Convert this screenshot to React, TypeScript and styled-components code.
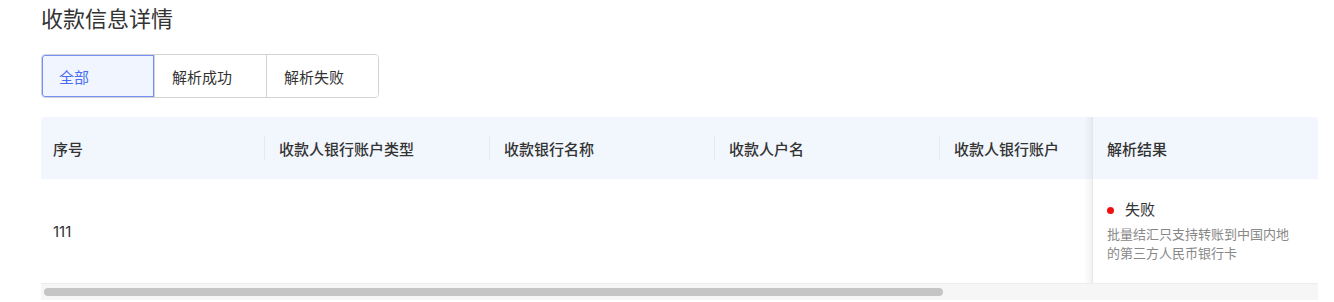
import React, { useState } from "react";
import styled, { createGlobalStyle } from "styled-components";

const GlobalStyle = createGlobalStyle`
  * { box-sizing: border-box; }
  body {
    margin: 0;
    background: #fff;
    font-family: Inter, "Noto Sans CJK SC", "Noto Sans", sans-serif;
    color: #333;
  }
`;

interface Column {
  key: string;
  title: string;
  width: number;
}

// the last one is scrolled out of view behind the fixed column
const columns: Column[] = [
  { key: "index", title: "序号", width: 224 },
  { key: "accountType", title: "收款人银行账户类型", width: 225 },
  { key: "bankName", title: "收款银行名称", width: 225 },
  { key: "payeeName", title: "收款人户名", width: 225 },
  { key: "account", title: "收款人银行账户", width: 225 },
  { key: "spare", title: "", width: 225 },
];

const tabs = ["全部", "解析成功", "解析失败"];

export default function App() {
  const [active, setActive] = useState(0);

  return (
    <>
      <GlobalStyle />
      <Page>
        <Title>收款信息详情</Title>
        <Segmented>
          {tabs.map((t, i) => (
            <Segment key={t} active={i === active} onClick={() => setActive(i)}>
              {t}
            </Segment>
          ))}
        </Segmented>

        <Table>
          <TableBody>
            <ScrollPart>
              <HeaderRow>
                {columns.map((c, i) => (
                  <HeadCell key={c.key} width={c.width} first={i === 0}>
                    {c.title}
                  </HeadCell>
                ))}
              </HeaderRow>
              <DataRow>
                {columns.map((c, i) => (
                  <DataCell key={c.key} width={c.width} first={i === 0}>
                    {i === 0 ? "111" : ""}
                  </DataCell>
                ))}
              </DataRow>
            </ScrollPart>
            <FixedPart>
              <FixedHead>解析结果</FixedHead>
              <FixedCell>
                <Status>
                  <Dot />
                  失败
                </Status>
                <Reason>批量结汇只支持转账到中国内地的第三方人民币银行卡</Reason>
              </FixedCell>
            </FixedPart>
          </TableBody>
          <ScrollTrack>
            <ScrollThumb />
          </ScrollTrack>
        </Table>
      </Page>
    </>
  );
}

const Page = styled.div`
  padding: 4px 16px 0 41px;
`;

const Title = styled.h2`
  margin: 0;
  font-size: 22px;
  font-weight: 400;
  line-height: 30px;
  color: #333;
`;

const Segmented = styled.div`
  display: inline-flex;
  margin-top: 20px;
  border: 1px solid #d3d3d3;
  border-radius: 4px;
  overflow: hidden;
`;

const Segment = styled.div<{ active: boolean }>`
  width: 112px;
  height: 42px;
  display: flex;
  align-items: center;
  padding-left: 17px;
  font-size: 15px;
  cursor: pointer;
  color: ${(p) => (p.active ? "#4a6cf2" : "#333")};
  background: ${(p) => (p.active ? "#f1f5ff" : "#fff")};
  border-left: 1px solid #d3d3d3;
  box-shadow: ${(p) => (p.active ? "0 0 0 1px #7590f5 inset" : "none")};

  &:first-child {
    border-left: none;
    border-radius: 3px 0 0 3px;
  }
`;

const Table = styled.div`
  margin-top: 19px;
  width: 1277px;
`;

const TableBody = styled.div`
  display: flex;
  border-bottom: 1px solid #ececec;
`;

const ScrollPart = styled.div`
  flex: 1;
  overflow: hidden;
`;

const HeaderRow = styled.div`
  display: flex;
  height: 62px;
  background: #f2f6fd;
  border-top-left-radius: 4px;
`;

const HeadCell = styled.div<{ width: number; first: boolean }>`
  position: relative;
  flex: 0 0 ${(p) => p.width}px;
  display: flex;
  align-items: center;
  padding-left: ${(p) => (p.first ? 12 : 14)}px;
  font-size: 15px;
  font-weight: 500;
  color: #333;
  white-space: nowrap;

  &::after {
    content: "";
    position: absolute;
    right: 0;
    top: 19px;
    height: 24px;
    width: 1px;
    background: #e4e9f2;
  }
`;

const DataRow = styled.div`
  display: flex;
  height: 104px;
`;

const DataCell = styled.div<{ width: number; first: boolean }>`
  flex: 0 0 ${(p) => p.width}px;
  display: flex;
  align-items: center;
  padding-left: ${(p) => (p.first ? 12 : 14)}px;
  font-size: 15px;
  color: #333;
`;

const FixedPart = styled.div`
  position: relative;
  flex: 0 0 226px;
  border-left: 1px solid #e6e6e6;

  &::before {
    content: "";
    position: absolute;
    left: -9px;
    top: 0;
    bottom: 0;
    width: 8px;
    background: linear-gradient(to right, rgba(0, 0, 0, 0), rgba(0, 0, 0, 0.05));
  }
`;

const FixedHead = styled.div`
  height: 62px;
  display: flex;
  align-items: center;
  padding-left: 14px;
  background: #f2f6fd;
  border-top-right-radius: 4px;
  font-size: 15px;
  font-weight: 500;
`;

const FixedCell = styled.div`
  height: 104px;
  display: flex;
  flex-direction: column;
  justify-content: center;
  padding-left: 14px;
`;

const Status = styled.div`
  display: flex;
  align-items: center;
  font-size: 15px;
  line-height: 22px;
  color: #333;
`;

const Dot = styled.span`
  width: 7px;
  height: 7px;
  border-radius: 50%;
  background: #f00f0f;
  margin-right: 11px;
`;

const Reason = styled.div`
  margin-top: 4px;
  max-width: 190px;
  font-size: 13px;
  line-height: 19px;
  color: #888;
`;

const ScrollTrack = styled.div`
  height: 16px;
  background: #f6f6f6;
  padding: 4px 3px;
`;

const ScrollThumb = styled.div`
  width: 899px;
  height: 8px;
  border-radius: 4px;
  background: #c5c5c5;
`;
